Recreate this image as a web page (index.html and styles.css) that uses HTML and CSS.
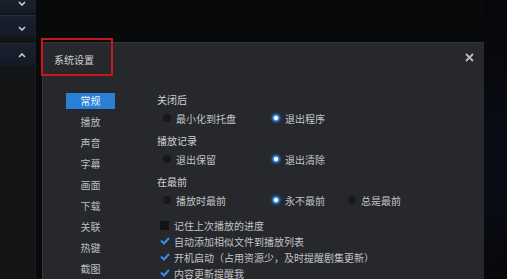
FILE: index.html
```html
<!DOCTYPE html>
<html lang="zh">
<head>
<meta charset="utf-8">
<link rel="stylesheet" href="styles.css">
</head>
<body>
<div class="app">
  <aside class="sidebar">
    <div class="srow srow-top"><svg class="chev" viewBox="0 0 8 5"><polyline points="1,1 4,4 7,1"/></svg></div>
    <div class="srow srow-a"><svg class="chev" viewBox="0 0 8 5"><polyline points="1,1 4,4 7,1"/></svg></div>
    <div class="srow srow-b"><svg class="chev" viewBox="0 0 8 5"><polyline points="1,4 4,1 7,4"/></svg></div>
  </aside>
  <main class="stage">
    <section class="dialog">
      <header class="dlg-head">
        <span class="dlg-title">系统设置</span>
        <svg class="close" viewBox="0 0 9 9"><line x1="1" y1="1" x2="8" y2="8"/><line x1="8" y1="1" x2="1" y2="8"/></svg>
        <div class="mark"></div>
      </header>
      <div class="dlg-body">
        <nav class="nav">
          <div class="nav-item active">常规</div>
          <div class="nav-item">播放</div>
          <div class="nav-item">声音</div>
          <div class="nav-item">字幕</div>
          <div class="nav-item">画面</div>
          <div class="nav-item">下载</div>
          <div class="nav-item">关联</div>
          <div class="nav-item">热键</div>
          <div class="nav-item">截图</div>
        </nav>
        <div class="content">
          <div class="group">
            <div class="heading">关闭后</div>
            <div class="options">
              <label class="opt w1"><span class="radio"></span>最小化到托盘</label>
              <label class="opt w2"><span class="radio on"></span>退出程序</label>
            </div>
          </div>
          <div class="group">
            <div class="heading">播放记录</div>
            <div class="options">
              <label class="opt w1"><span class="radio"></span>退出保留</label>
              <label class="opt w2"><span class="radio on"></span>退出清除</label>
            </div>
          </div>
          <div class="group">
            <div class="heading">在最前</div>
            <div class="options">
              <label class="opt w1"><span class="radio"></span>播放时最前</label>
              <label class="opt w2"><span class="radio on"></span>永不最前</label>
              <label class="opt"><span class="radio"></span>总是最前</label>
            </div>
          </div>
          <div class="checks">
            <label class="check"><span class="box"></span>记住上次播放的进度</label>
            <label class="check"><svg class="tick" viewBox="0 0 10 8"><polyline points="1,3.5 4,6.5 9,1"/></svg>自动添加相似文件到播放列表</label>
            <label class="check"><svg class="tick" viewBox="0 0 10 8"><polyline points="1,3.5 4,6.5 9,1"/></svg>开机启动（占用资源少，及时提醒剧集更新）</label>
            <label class="check"><svg class="tick" viewBox="0 0 10 8"><polyline points="1,3.5 4,6.5 9,1"/></svg>内容更新提醒我</label>
          </div>
        </div>
      </div>
    </section>
    <div class="right-edge"></div>
  </main>
</div>
</body>
</html>
```

FILE: styles.css
```css
* { box-sizing: border-box; }
html, body {
  margin: 0;
  padding: 0;
  width: 507px;
  height: 279px;
  overflow: hidden;
  background: #07080a;
  font-family: "Noto Sans CJK SC", "Noto Sans", sans-serif;
  font-size: 10px;
  color: #c3c5c8;
}
.app {
  display: flex;
  height: 279px;
}
.sidebar {
  width: 36px;
  flex: none;
  background: #131416;
  border-right: 1px solid #1c1e21;
  display: flex;
  flex-direction: column;
}
.srow {
  display: flex;
  justify-content: flex-start;
  padding-left: 18px;
  background: linear-gradient(#19202e, #141925);
}
.srow-top {
  height: 13px;
  align-items: flex-start;
  padding-top: 1px;
}
.srow-a {
  height: 22px;
  margin-top: 2px;
  align-items: center;
  border-top: 1px solid #24304a;
  padding-top: 3px;
}
.srow-b {
  height: 23px;
  margin-top: 6px;
  align-items: center;
  border-top: 1px solid #222a3a;
}
.chev {
  width: 8px;
  height: 5px;
  fill: none;
  stroke: #c9ccd2;
  stroke-width: 1.6;
}
.stage {
  flex: 1;
  display: flex;
  padding: 42px 0 0 6px;
  background: #08090b;
}
.dialog {
  position: relative;
  width: 442px;
  flex: none;
  background: #26282b;
  border-top: 1px solid #34373a;
  border-left: 1px solid #34373a;
}
.right-edge {
  flex: 1;
  margin-top: -42px;
  background: linear-gradient(160deg, #06070a, #0a0d16 60%, #07080c);
}
.dlg-head {
  position: relative;
  height: 33px;
  display: flex;
  align-items: center;
  justify-content: space-between;
  padding: 0 10px 0 11px;
}
.dlg-title {
  color: #cfd1d4;
}
.close {
  width: 9px;
  height: 9px;
  stroke: #b9bbbe;
  stroke-width: 1.8;
  margin-top: -4px;
}
.mark {
  position: absolute;
  left: -2px;
  top: -5px;
  width: 72px;
  height: 38px;
  border: 2px solid #c8161e;
}
.dlg-body {
  display: flex;
  padding-top: 15px;
}
.nav {
  width: 114px;
  flex: none;
  padding: 2px 0 0 23px;
  display: flex;
  flex-direction: column;
  gap: 5px;
}
.nav-item {
  width: 49px;
  height: 16px;
  line-height: 16px;
  text-align: center;
  color: #bdbfc2;
}
.nav-item.active {
  background: #2a80d6;
  color: #eef5ff;
}
.content {
  display: flex;
  flex-direction: column;
}
.group {
  margin-bottom: 5px;
}
.heading {
  height: 18px;
  line-height: 18px;
  color: #d0d2d5;
}
.options {
  display: flex;
  height: 18px;
  align-items: center;
  padding-left: 6px;
}
.opt {
  display: flex;
  align-items: center;
}
.opt.w1 { width: 109px; }
.opt.w2 { width: 76px; }
.radio {
  width: 8px;
  height: 8px;
  border-radius: 50%;
  background: #17181a;
  margin-right: 5px;
  flex: none;
}
.radio.on {
  background: radial-gradient(circle, #ffffff 0 1.6px, #4a9cf0 2.4px, #1f5da8 4px);
  box-shadow: 0 0 3px #2d7fd8;
}
.checks {
  margin-top: 3px;
  display: flex;
  flex-direction: column;
}
.check {
  display: flex;
  align-items: center;
  height: 16px;
  padding-left: 3px;
  white-space: nowrap;
}
.box {
  width: 9px;
  height: 9px;
  background: #131416;
  margin-right: 5px;
  flex: none;
}
.tick {
  width: 10px;
  height: 8px;
  fill: none;
  stroke: #3a8fe8;
  stroke-width: 2;
  margin-right: 4px;
  flex: none;
}
```
